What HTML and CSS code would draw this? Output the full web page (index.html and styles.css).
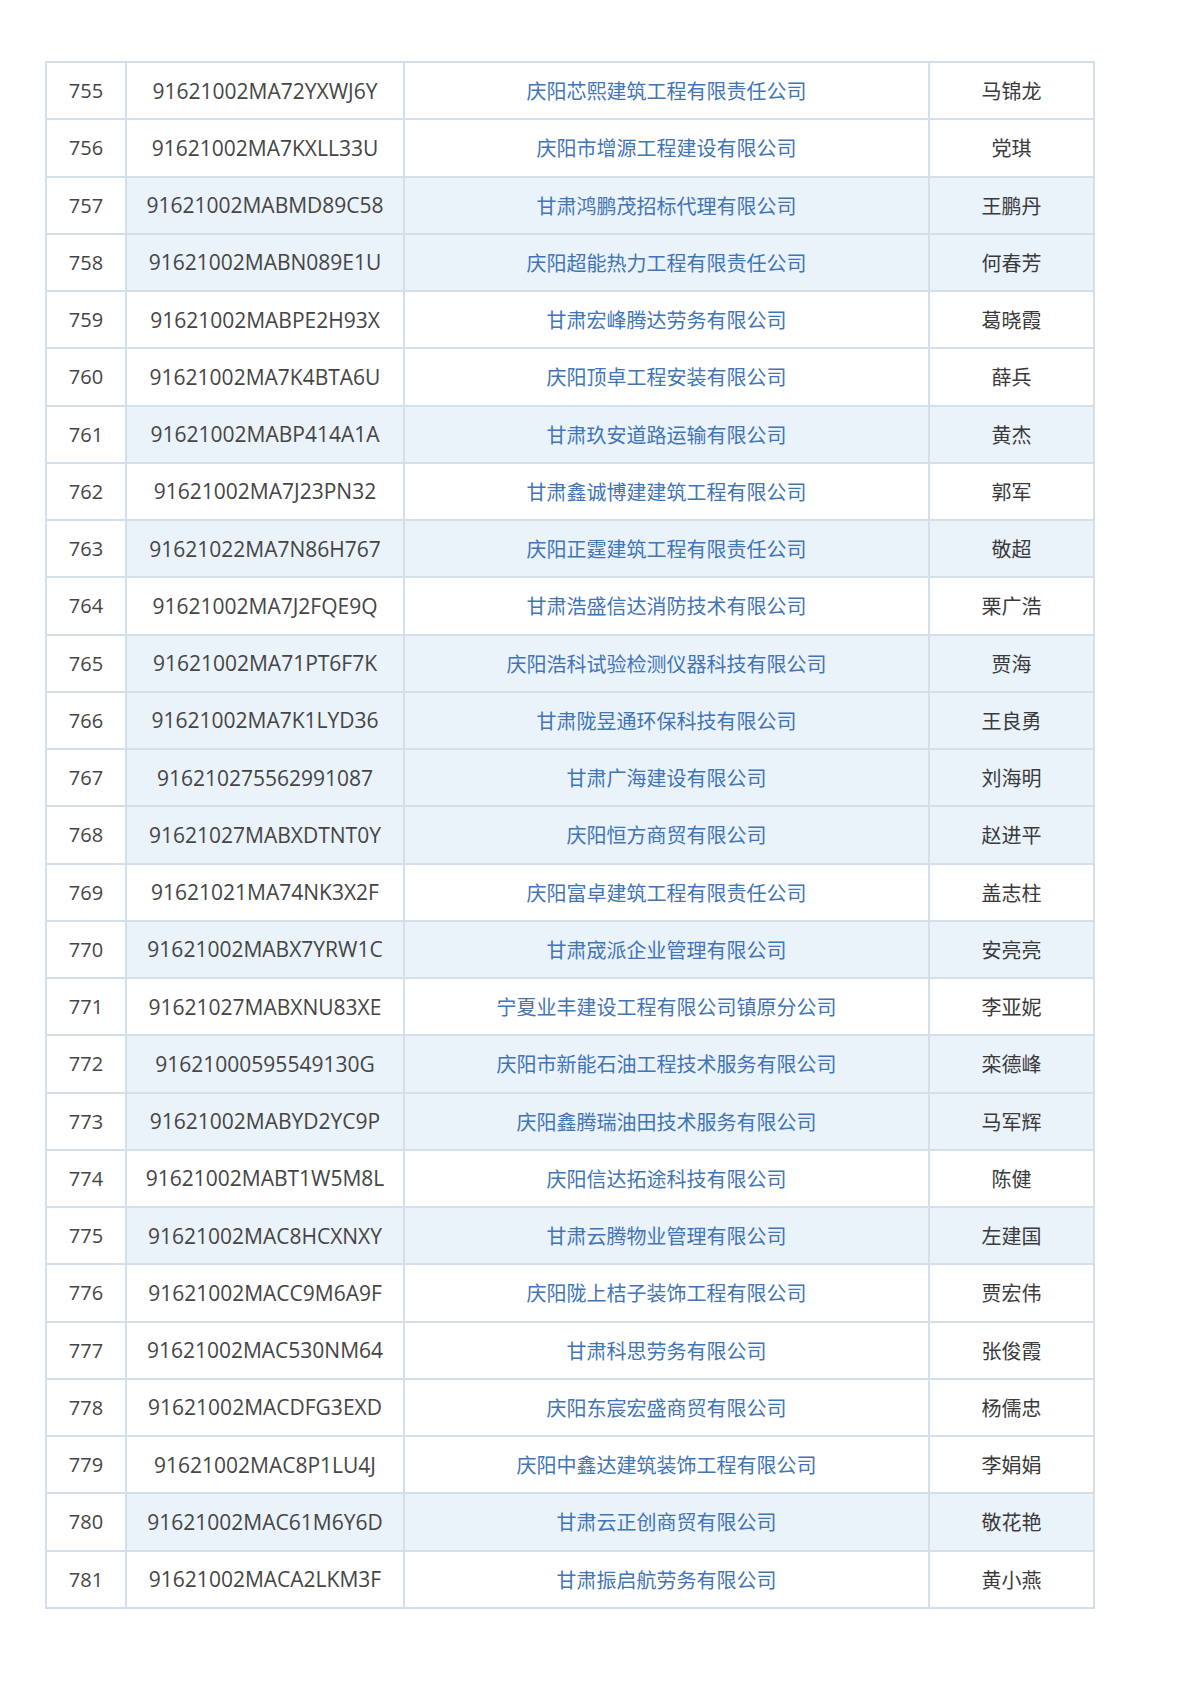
FILE: index.html
```html
<!DOCTYPE html>
<html lang="zh-CN">
<head>
<meta charset="utf-8">
<title>名单</title>
<link rel="stylesheet" href="styles.css">
</head>
<body>
<div class="sheet">
  <div class="row"><div class="c no">755</div><div class="c code">91621002MA72YXWJ6Y</div><div class="c corp">庆阳芯熙建筑工程有限责任公司</div><div class="c name">马锦龙</div></div>
  <div class="row"><div class="c no">756</div><div class="c code">91621002MA7KXLL33U</div><div class="c corp">庆阳市增源工程建设有限公司</div><div class="c name">党琪</div></div>
  <div class="row hl"><div class="c no">757</div><div class="c code">91621002MABMD89C58</div><div class="c corp">甘肃鸿鹏茂招标代理有限公司</div><div class="c name">王鹏丹</div></div>
  <div class="row hl"><div class="c no">758</div><div class="c code">91621002MABN089E1U</div><div class="c corp">庆阳超能热力工程有限责任公司</div><div class="c name">何春芳</div></div>
  <div class="row"><div class="c no">759</div><div class="c code">91621002MABPE2H93X</div><div class="c corp">甘肃宏峰腾达劳务有限公司</div><div class="c name">葛晓霞</div></div>
  <div class="row"><div class="c no">760</div><div class="c code">91621002MA7K4BTA6U</div><div class="c corp">庆阳顶卓工程安装有限公司</div><div class="c name">薛兵</div></div>
  <div class="row hl"><div class="c no">761</div><div class="c code">91621002MABP414A1A</div><div class="c corp">甘肃玖安道路运输有限公司</div><div class="c name">黄杰</div></div>
  <div class="row"><div class="c no">762</div><div class="c code">91621002MA7J23PN32</div><div class="c corp">甘肃鑫诚博建建筑工程有限公司</div><div class="c name">郭军</div></div>
  <div class="row hl"><div class="c no">763</div><div class="c code">91621022MA7N86H767</div><div class="c corp">庆阳正霆建筑工程有限责任公司</div><div class="c name">敬超</div></div>
  <div class="row"><div class="c no">764</div><div class="c code">91621002MA7J2FQE9Q</div><div class="c corp">甘肃浩盛信达消防技术有限公司</div><div class="c name">栗广浩</div></div>
  <div class="row hl"><div class="c no">765</div><div class="c code">91621002MA71PT6F7K</div><div class="c corp">庆阳浩科试验检测仪器科技有限公司</div><div class="c name">贾海</div></div>
  <div class="row hl"><div class="c no">766</div><div class="c code">91621002MA7K1LYD36</div><div class="c corp">甘肃陇昱通环保科技有限公司</div><div class="c name">王良勇</div></div>
  <div class="row hl"><div class="c no">767</div><div class="c code">916210275562991087</div><div class="c corp">甘肃广海建设有限公司</div><div class="c name">刘海明</div></div>
  <div class="row hl"><div class="c no">768</div><div class="c code">91621027MABXDTNT0Y</div><div class="c corp">庆阳恒方商贸有限公司</div><div class="c name">赵进平</div></div>
  <div class="row"><div class="c no">769</div><div class="c code">91621021MA74NK3X2F</div><div class="c corp">庆阳富卓建筑工程有限责任公司</div><div class="c name">盖志柱</div></div>
  <div class="row hl"><div class="c no">770</div><div class="c code">91621002MABX7YRW1C</div><div class="c corp">甘肃宬派企业管理有限公司</div><div class="c name">安亮亮</div></div>
  <div class="row"><div class="c no">771</div><div class="c code">91621027MABXNU83XE</div><div class="c corp">宁夏业丰建设工程有限公司镇原分公司</div><div class="c name">李亚妮</div></div>
  <div class="row hl"><div class="c no">772</div><div class="c code">91621000595549130G</div><div class="c corp">庆阳市新能石油工程技术服务有限公司</div><div class="c name">栾德峰</div></div>
  <div class="row hl"><div class="c no">773</div><div class="c code">91621002MABYD2YC9P</div><div class="c corp">庆阳鑫腾瑞油田技术服务有限公司</div><div class="c name">马军辉</div></div>
  <div class="row"><div class="c no">774</div><div class="c code">91621002MABT1W5M8L</div><div class="c corp">庆阳信达拓途科技有限公司</div><div class="c name">陈健</div></div>
  <div class="row hl"><div class="c no">775</div><div class="c code">91621002MAC8HCXNXY</div><div class="c corp">甘肃云腾物业管理有限公司</div><div class="c name">左建国</div></div>
  <div class="row"><div class="c no">776</div><div class="c code">91621002MACC9M6A9F</div><div class="c corp">庆阳陇上桔子装饰工程有限公司</div><div class="c name">贾宏伟</div></div>
  <div class="row"><div class="c no">777</div><div class="c code">91621002MAC530NM64</div><div class="c corp">甘肃科思劳务有限公司</div><div class="c name">张俊霞</div></div>
  <div class="row"><div class="c no">778</div><div class="c code">91621002MACDFG3EXD</div><div class="c corp">庆阳东宸宏盛商贸有限公司</div><div class="c name">杨儒忠</div></div>
  <div class="row"><div class="c no">779</div><div class="c code">91621002MAC8P1LU4J</div><div class="c corp">庆阳中鑫达建筑装饰工程有限公司</div><div class="c name">李娟娟</div></div>
  <div class="row hl"><div class="c no">780</div><div class="c code">91621002MAC61M6Y6D</div><div class="c corp">甘肃云正创商贸有限公司</div><div class="c name">敬花艳</div></div>
  <div class="row"><div class="c no">781</div><div class="c code">91621002MACA2LKM3F</div><div class="c corp">甘肃振启航劳务有限公司</div><div class="c name">黄小燕</div></div>
</div>
</body>
</html>
```
FILE: styles.css
```css
html, body {
  margin: 0;
  padding: 0;
  background: #ffffff;
}
body {
  padding: 61px 0 0 45px;
  font-family: "Noto Sans CJK SC", "Noto Sans", sans-serif;
  font-size: 20px;
  color: #444444;
}
.sheet {
  width: 1050px;
  box-sizing: border-box;
  border-left: 2px solid #d5dfea;
  border-top: 2px solid #d5dfea;
  display: grid;
  grid-template-columns: 80px 278px 525px 165px;
  grid-auto-rows: 57.26px;
}
.row {
  display: contents;
}
.c {
  box-sizing: border-box;
  border-right: 2px solid #d5dfea;
  border-bottom: 2px solid #d5dfea;
  display: flex;
  align-items: center;
  justify-content: center;
  background: #ffffff;
  white-space: nowrap;
}
.row.hl .code,
.row.hl .corp,
.row.hl .name {
  background: #eaf2fa;
}
.no,
.code {
  font-family: "Open Sans", "Noto Sans CJK SC", sans-serif;
  color: #454545;
}
.code {
  font-size: 21px;
}
.corp {
  color: #4175b6;
}
.name {
  color: #3a3a3a;
}
```
